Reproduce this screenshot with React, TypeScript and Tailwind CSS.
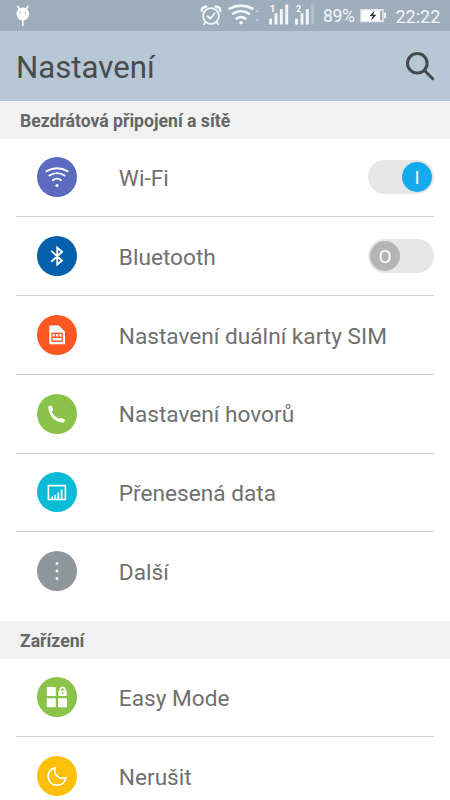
import type { ReactNode } from 'react';

type Item = {
  label: string;
  color: string;
  icon: ReactNode;
  toggle?: 'on' | 'off';
};

const stroke = { fill: 'none', stroke: '#fff', strokeLinecap: 'round', strokeLinejoin: 'round' } as const;

const network: Item[] = [
  {
    label: 'Wi-Fi',
    color: '#5c6bc0',
    toggle: 'on',
    icon: (
      <g {...stroke} strokeWidth="1.8">
        <path d="M9.3 14.2Q20 8.3 30.7 14.2" />
        <path d="M12.3 18.6Q20 13.6 27.7 18.6" />
        <path d="M15.8 23.3Q20 20 24.2 23.3" />
        <circle cx="20" cy="28.5" r="1.6" fill="#fff" stroke="none" />
      </g>
    ),
  },
  {
    label: 'Bluetooth',
    color: '#0560ab',
    toggle: 'off',
    icon: <path {...stroke} strokeWidth="1.9" strokeLinejoin="miter" d="M14.9 15.4L25 24.8L20.3 28.6V11.8L25 15.8L14.9 25.2" />,
  },
  {
    label: 'Nastavení duální karty SIM',
    color: '#fa5722',
    icon: (
      <>
        <path d="M12.3 10.5H21.8L28 16.7V29.3H12.3Z" fill="#fff" />
        <path d="M14.3 17.6H25.9V26.9H14.3Z" fill="#fa5722" />
        <path d="M15.6 18.9H17.8V21.4H15.6ZM19 18.9H21.2V21.4H19ZM22.4 18.9H24.6V21.4H22.4ZM15.6 23H24.6V25.4H15.6Z" fill="#fff" />
      </>
    ),
  },
  {
    label: 'Nastavení hovorů',
    color: '#8bc34a',
    icon: (
      <path
        d="M11.5 12.6L13.6 11.6Q14.5 11.3 14.9 12.2L16 15.5Q16.2 16.3 15.5 16.8L14.8 17.4Q17 22.4 22 24.9L22.9 24.2Q23.4 23.8 24.1 24.1L27.4 25.2Q28.3 25.6 27.9 26.4L27.1 28Q26.7 28.7 25.8 28.6Q13.5 27.5 11.2 14Q11.1 13 11.5 12.6Z"
        fill="#fff"
      />
    ),
  },
  {
    label: 'Přenesená data',
    color: '#0cbcd6',
    icon: (
      <>
        <path d="M11.4 13.6H28.4V27.5H11.4Z" fill="none" stroke="#fff" strokeWidth="1.6" />
        <path d="M15.2 27V24.5M18.2 27V22.8M21.3 27V20.6M24.6 27V17.8" fill="none" stroke="#fff" strokeWidth="1.8" />
      </>
    ),
  },
  {
    label: 'Další',
    color: '#8e989c',
    icon: (
      <g fill="#fff">
        <circle cx="20" cy="12.6" r="1.4" />
        <circle cx="20" cy="20" r="1.4" />
        <circle cx="20" cy="27.5" r="1.4" />
      </g>
    ),
  },
];

const device: Item[] = [
  {
    label: 'Easy Mode',
    color: '#8bc34a',
    icon: (
      <g fill="#fff">
        <rect x="9.8" y="10" width="9" height="9" rx=".6" />
        <rect x="9.8" y="21.2" width="9" height="9" rx=".6" />
        <rect x="21" y="21.2" width="9" height="9" rx=".6" />
        <rect x="21.4" y="13.5" width="8.4" height="5.5" rx=".6" />
        <path d="M23.2 14V13Q23.2 10.5 25.6 10.5T28 13V14" fill="none" stroke="#fff" strokeWidth="1.3" />
        <circle cx="25.6" cy="16" r=".9" fill="#8bc34a" />
      </g>
    ),
  },
  {
    label: 'Nerušit',
    color: '#fcc00a',
    icon: <path {...stroke} strokeWidth="1.7" d="M18.3 11.6C12.8 13.2 10.7 17 11.2 21.4C11.9 26.2 15.5 29.3 20.2 29.2C24.8 29.1 28.3 26.1 28.9 21.5C22.5 24.3 15.7 18.2 18.3 11.6Z" />,
  },
];

function Toggle({ state }: { state: 'on' | 'off' }) {
  const on = state === 'on';
  return (
    <div className={`flex h-[34px] w-[66px] items-center rounded-full bg-[#e6e6e6] px-0.5 ${on ? 'justify-end' : 'justify-start'}`}>
      <span className={`grid h-[30px] w-[30px] place-items-center rounded-full text-[19px] leading-none text-white ${on ? 'bg-[#15abeb]' : 'bg-[#b4b4b4]'}`}>
        {on ? 'I' : 'O'}
      </span>
    </div>
  );
}

function SettingsList({ items }: { items: Item[] }) {
  return (
    <ul className="px-4">
      {items.map((item) => (
        <li className="flex h-[78.75px] items-center border-b border-[#cccccc] pl-[21.3px] last:border-transparent" key={item.label}>
          <svg className="h-10 w-10 shrink-0" viewBox="0 0 40 40" aria-hidden="true">
            <circle cx="20" cy="20" r="20" fill={item.color} />
            {item.icon}
          </svg>
          <span className="ml-[41.5px] flex-1 pt-[3.5px] text-[22.65px] leading-7 whitespace-nowrap text-[#707070]">{item.label}</span>
          {item.toggle && <Toggle state={item.toggle} />}
        </li>
      ))}
    </ul>
  );
}

function SectionTitle({ children }: { children: ReactNode }) {
  return (
    <h2 className="flex h-[37.5px] items-center bg-[#f1f1f1] px-5 pt-0.5 text-[17.6px] font-bold text-[#666666]">{children}</h2>
  );
}

function StatusBar() {
  return (
    <div className="flex h-[31px] items-center bg-[#9eadbb] text-[#f3f6f8]">
      <svg className="ml-4 h-[31px] w-[14px]" viewBox="0 0 14 31" fill="#fff" aria-hidden="true">
        <circle cx="6.8" cy="14" r="6.4" />
        <path d="M1.6 6.3L4 10M12 6.3L9.6 10M6.8 20V25.3" stroke="#fff" strokeWidth="1.6" strokeLinecap="round" />
        <circle cx="4" cy="12.3" r=".8" fill="#9eadbb" />
        <circle cx="9.6" cy="12.3" r=".8" fill="#9eadbb" />
      </svg>

      <svg className="ml-[170px] h-[31px] w-[22px]" viewBox="0 0 22 31" fill="none" stroke="currentColor" strokeWidth="1.8" strokeLinecap="round" aria-hidden="true">
        <circle cx="11" cy="16" r="7.9" />
        <path d="M7.5 16L10.3 18.7L14.6 13.5M5.7 22L3.8 24.3M16.3 22L18.2 24.3" />
        <path d="M1.8 10.8Q1.3 7 6.2 6.9M20.2 10.8Q20.7 7 15.8 6.9" strokeWidth="2.6" />
      </svg>

      <svg className="ml-1.5 h-[31px] w-[33px]" viewBox="0 0 33 31" fill="none" stroke="currentColor" strokeWidth="2.6" strokeLinecap="round" aria-hidden="true">
        <path d="M1.5 8.6Q13 2.6 24.5 8.6M5 13.6Q13 9 21 13.6M8.6 18.6Q13 15.7 17.4 18.6" />
        <circle cx="13" cy="22.7" r="1.8" fill="currentColor" stroke="none" />
        <path d="M27.3 12.3L29.3 9.5L31.3 12.3ZM27.3 19L29.3 21.8L31.3 19Z" fill="#c3cdd6" stroke="none" />
      </svg>

      <SignalBars sim="1" weak={false} />
      <SignalBars sim="2" weak />

      <span className="ml-[8px] w-[33px] pt-0.5 text-[17.6px] tracking-tight">89%</span>
      <svg className="ml-[3.5px] h-[31px] w-[27px]" viewBox="0 0 27 31" aria-hidden="true">
        <path d="M1 9.7H23V21.4H1Z" fill="#fff" stroke="#e4e9ed" strokeWidth="1.5" />
        <path d="M20 10.8H22.3V20.3H20Z" fill="#9eadbb" />
        <path d="M24 12.8H26V18.2H24Z" fill="#f3f6f8" />
        <path d="M14.8 10.4L9.5 16.1H12.8L10.8 20.7L16.5 14.8H13.2Z" fill="#333" />
      </svg>
      <span className="ml-[9px] pt-0.5 text-[18px] leading-none">22:22</span>
    </div>
  );
}

function SignalBars({ sim, weak }: { sim: string; weak: boolean }) {
  return (
    <svg className={`h-[31px] w-5 ${weak ? 'ml-[6px]' : 'ml-[8px]'}`} viewBox="0 0 20 31" aria-hidden="true">
      <path d="M1.6 24.5V18.7M7 24.5V13.3M12.3 24.5V9" stroke="#f3f6f8" strokeWidth="2.9" />
      <path d="M17.7 24.5V4.5" stroke={weak ? '#b3c0ca' : '#f3f6f8'} strokeWidth="2.9" />
      <text x="1" y="12.4" fontSize="9" fontWeight="700" fill="#fff">{sim}</text>
    </svg>
  );
}

export default function App() {
  return (
    <main className="h-[800px] w-[450px] overflow-hidden bg-white font-['Roboto',sans-serif]">
      <StatusBar />
      <header className="flex h-[70px] items-center justify-between bg-[#b7c7d5] pr-[15px] pl-4">
        <h1 className="pt-[3px] text-[31.2px] leading-none text-[#484c4f]">Nastavení</h1>
        <svg className="h-[30px] w-[30px]" viewBox="0 0 30 30" fill="none" stroke="#46494b" strokeLinecap="round" aria-hidden="true">
          <circle cx="12.3" cy="12.3" r="9.8" strokeWidth="3" />
          <path d="M19.8 19.8L27.7 27.7" strokeWidth="3" />
        </svg>
      </header>

      <SectionTitle>Bezdrátová připojení a sítě</SectionTitle>
      <SettingsList items={network} />
      <div className="h-[10px]" />
      <SectionTitle>Zařízení</SectionTitle>
      <SettingsList items={device} />
    </main>
  );
}
